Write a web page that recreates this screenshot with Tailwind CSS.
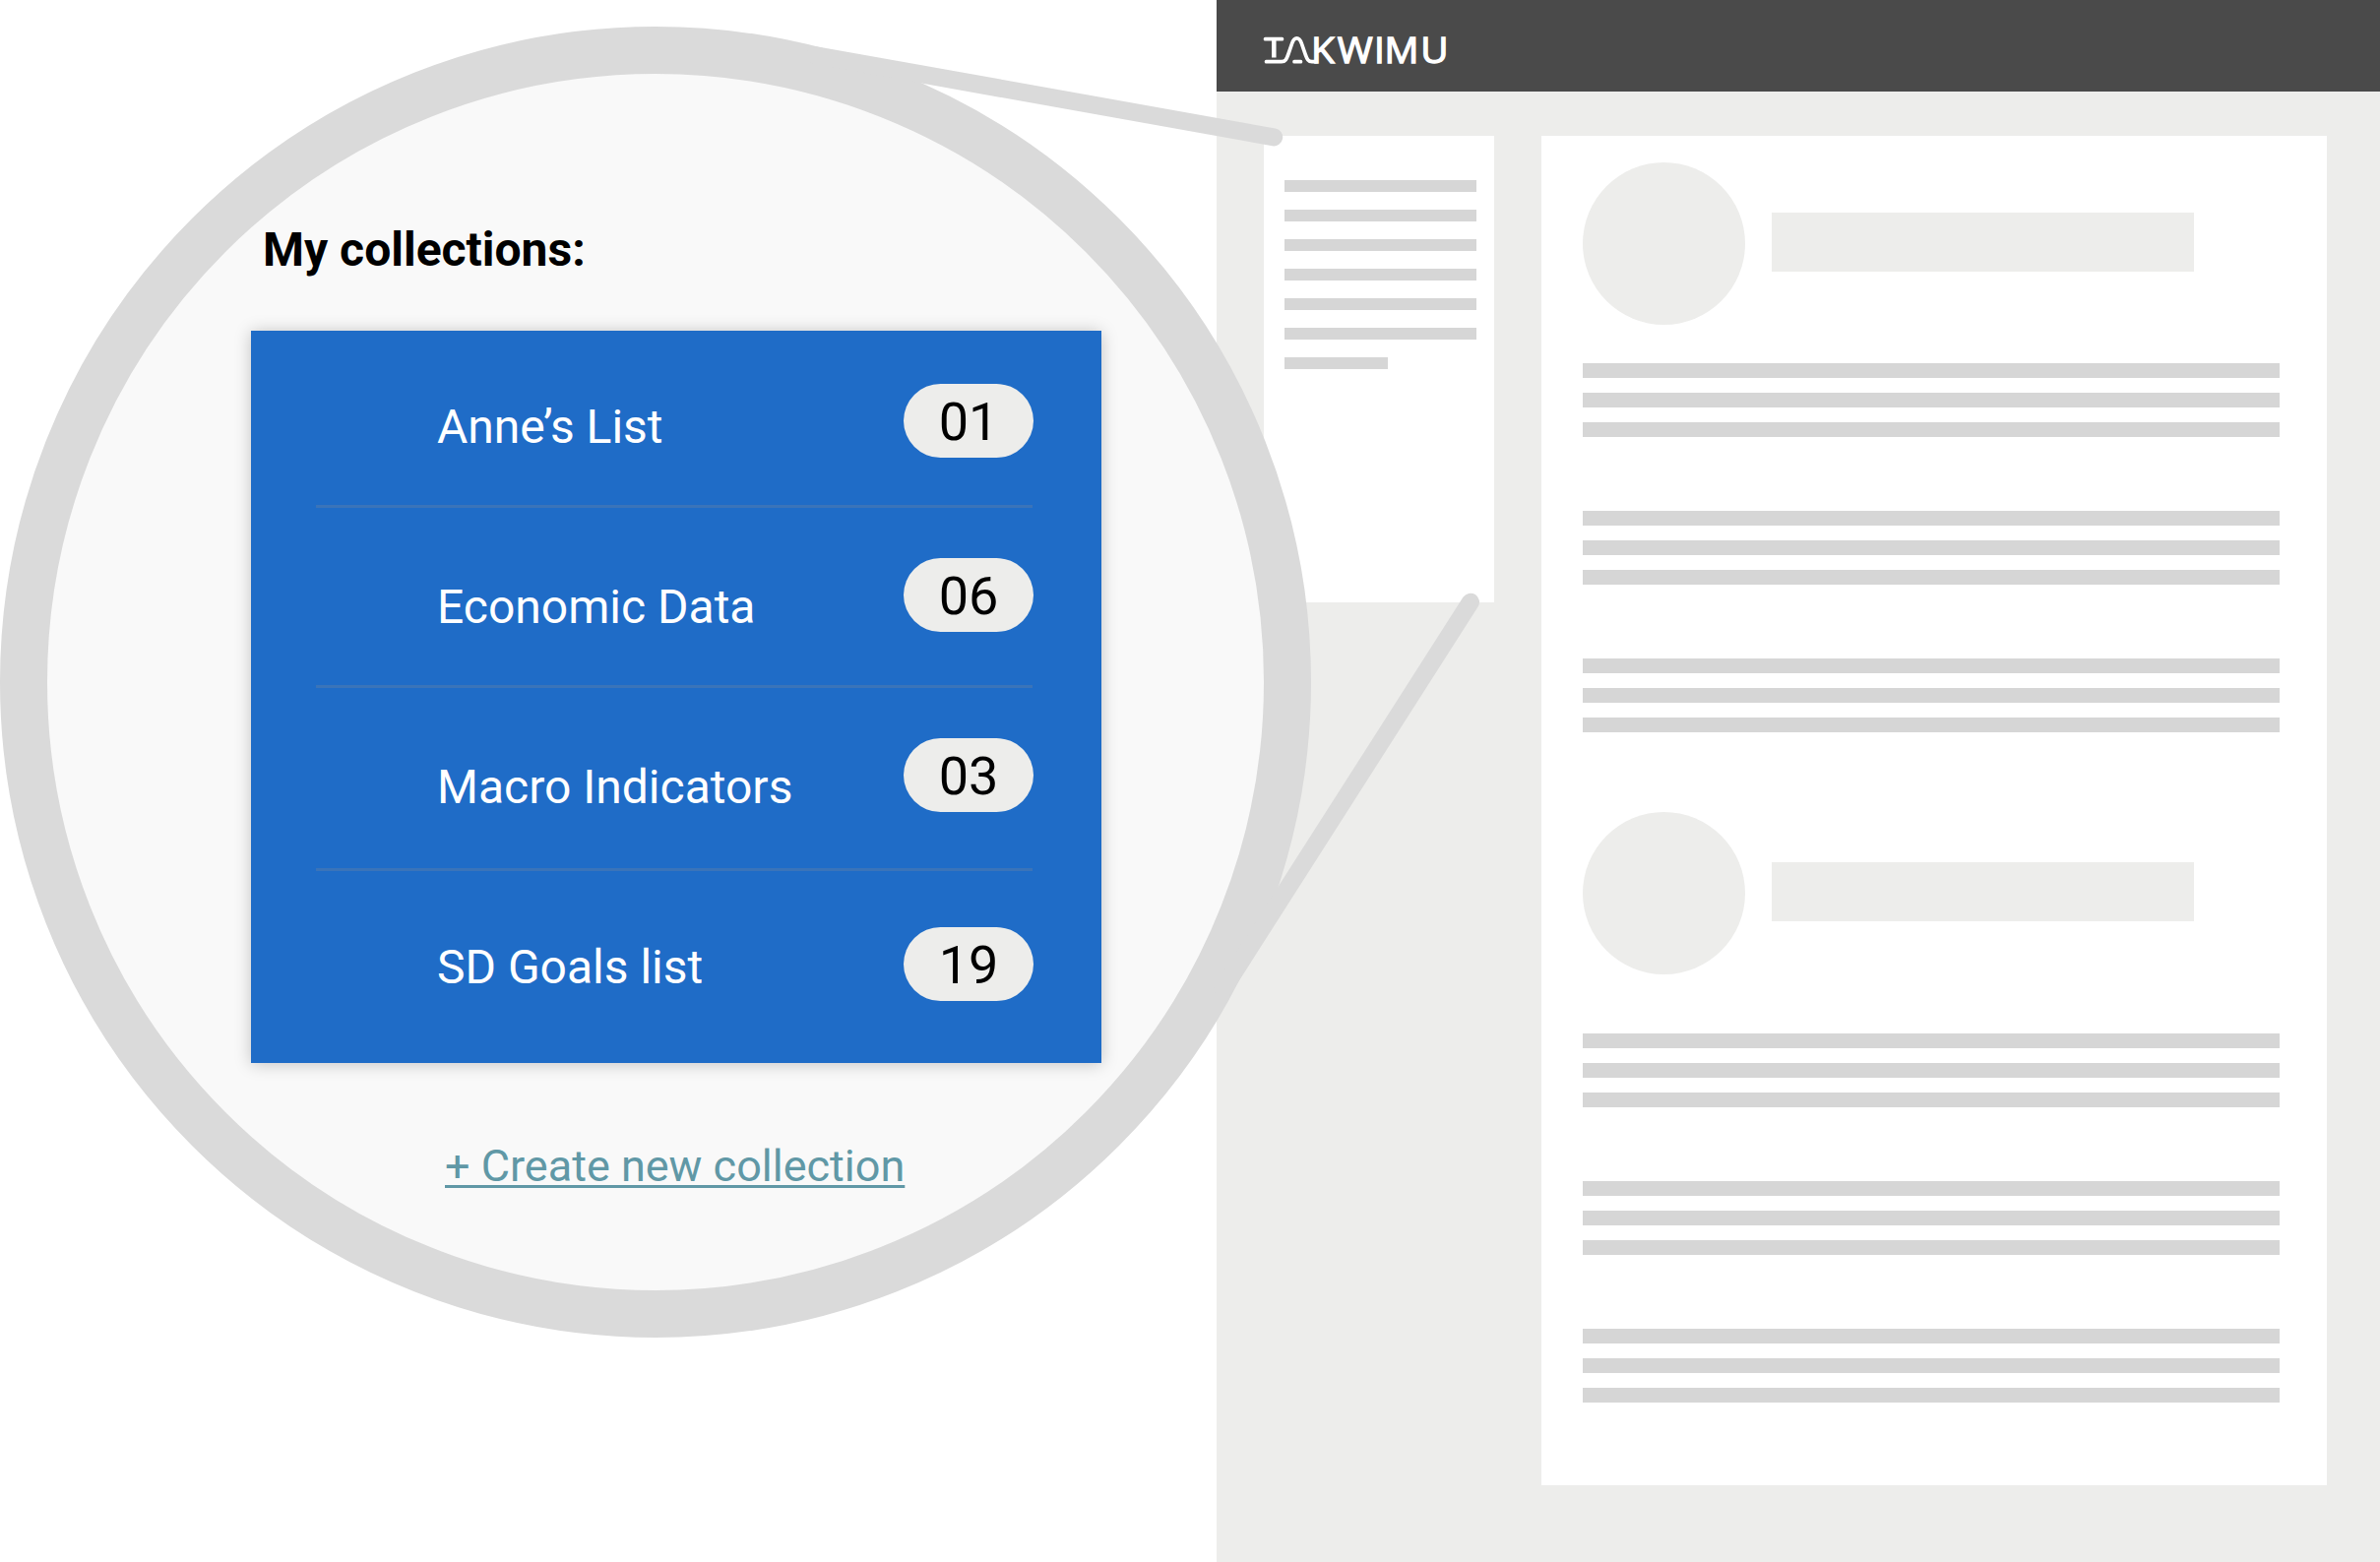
<!DOCTYPE html>
<html lang="en">
<head>
<meta charset="utf-8">
<title>Takwimu collections</title>
<script src="https://cdn.jsdelivr.net/npm/@tailwindcss/browser@4"></script>
</head>
<body class="bg-white font-['Roboto',sans-serif]">
<div class="relative flex h-[1587px] w-[2418px] justify-end overflow-hidden">

  <!-- Page wireframe -->
  <div class="flex w-[1182px] flex-col bg-[#ededeb]">
    <header class="flex h-[93px] shrink-0 items-start bg-[#4a4a4a] pl-12 pt-[36px]">
      <svg class="h-[32px] w-[200px] overflow-visible" viewBox="0 0 200 32" fill="none" stroke="#fff" role="img" aria-label="Takwimu">
        <path d="M1.500 3.700H18.500M2.500 26.700H18C22 26.700 23 24 24.500 20L28.500 8.500C31 1 36 1 38.500 8.500L42.500 20C44 24 45 26.700 49 26.700H53M31 26.700H37.500" stroke-width="3.700" stroke-linecap="round"/>
        <path d="M10.300 4V22.500" stroke-width="4.500"/>
        <text transform="scale(1.05 1)" y="28.300" x="45.700 71.100 106.600 116.600 151.700" fill="#fff" stroke-width="1.300" font-family="Open Sans" font-size="37">KWIMU</text>
      </svg>
    </header>
    <div class="flex items-start gap-12 pl-12 pt-[45px]">
      <aside class="flex h-[474px] w-[234px] flex-col gap-[18px] bg-white pl-[21px] pr-[18px] pt-[45px]">
        <div class="h-3 bg-[#d6d6d6]"></div>
        <div class="h-3 bg-[#d6d6d6]"></div>
        <div class="h-3 bg-[#d6d6d6]"></div>
        <div class="h-3 bg-[#d6d6d6]"></div>
        <div class="h-3 bg-[#d6d6d6]"></div>
        <div class="h-3 bg-[#d6d6d6]"></div>
        <div class="h-3 w-[105px] bg-[#d6d6d6]"></div>
      </aside>
      <main class="flex h-[1371px] w-[798px] flex-col bg-white pl-[42px] pr-12 pt-[27px]">
        <div class="flex h-[165px] gap-[27px]">
          <div class="size-[165px] rounded-full bg-[#ededeb]"></div>
          <div class="mt-[51px] h-[60px] w-[429px] bg-[#ededeb]"></div>
        </div>
        <div class="mt-[39px] flex flex-col gap-[75px]">
          <div class="flex flex-col gap-[15px]"><div class="h-[15px] bg-[#d6d6d6]"></div><div class="h-[15px] bg-[#d6d6d6]"></div><div class="h-[15px] bg-[#d6d6d6]"></div></div>
          <div class="flex flex-col gap-[15px]"><div class="h-[15px] bg-[#d6d6d6]"></div><div class="h-[15px] bg-[#d6d6d6]"></div><div class="h-[15px] bg-[#d6d6d6]"></div></div>
          <div class="flex flex-col gap-[15px]"><div class="h-[15px] bg-[#d6d6d6]"></div><div class="h-[15px] bg-[#d6d6d6]"></div><div class="h-[15px] bg-[#d6d6d6]"></div></div>
        </div>
        <div class="mt-[81px] flex h-[165px] gap-[27px]">
          <div class="size-[165px] rounded-full bg-[#ededeb]"></div>
          <div class="mt-[51px] h-[60px] w-[429px] bg-[#ededeb]"></div>
        </div>
        <div class="mt-[60px] flex flex-col gap-[75px]">
          <div class="flex flex-col gap-[15px]"><div class="h-[15px] bg-[#d6d6d6]"></div><div class="h-[15px] bg-[#d6d6d6]"></div><div class="h-[15px] bg-[#d6d6d6]"></div></div>
          <div class="flex flex-col gap-[15px]"><div class="h-[15px] bg-[#d6d6d6]"></div><div class="h-[15px] bg-[#d6d6d6]"></div><div class="h-[15px] bg-[#d6d6d6]"></div></div>
          <div class="flex flex-col gap-[15px]"><div class="h-[15px] bg-[#d6d6d6]"></div><div class="h-[15px] bg-[#d6d6d6]"></div><div class="h-[15px] bg-[#d6d6d6]"></div></div>
        </div>
      </main>
    </div>
  </div>

  <!-- Magnifier callout -->
  <section class="absolute left-0 top-[27px] size-[1332px] rounded-full border-[48px] border-[#dadada] bg-[#f9f9f9] pl-[207px] pt-[151px]">
    <h1 class="ml-3 text-[48px] leading-[56px] font-bold whitespace-nowrap text-black">My collections:</h1>
    <ul class="mt-[54px] h-[744px] w-[864px] bg-[#1f6cc7] pl-[66px] pr-[70px] text-[48px] leading-[56px] text-white shadow-[0_1px_16px_rgba(0,0,0,0.22)]">
      <li class="flex h-[180px] items-start border-b-[3px] border-[#3a74b9] pl-[123px]">
        <span class="mt-[70px]">Anne’s List</span>
        <span class="-mr-px ml-auto mt-[54px] h-[75px] w-[132px] rounded-full bg-[#ededeb] pt-px text-center text-[54px] leading-[75px] text-black">01</span>
      </li>
      <li class="flex h-[183px] items-start border-b-[3px] border-[#3a74b9] pl-[123px]">
        <span class="mt-[73px]">Economic Data</span>
        <span class="-mr-px ml-auto mt-[51px] h-[75px] w-[132px] rounded-full bg-[#ededeb] pt-px text-center text-[54px] leading-[75px] text-black">06</span>
      </li>
      <li class="flex h-[186px] items-start border-b-[3px] border-[#3a74b9] pl-[123px]">
        <span class="mt-[73px]">Macro Indicators</span>
        <span class="-mr-px ml-auto mt-[51px] h-[75px] w-[132px] rounded-full bg-[#ededeb] pt-px text-center text-[54px] leading-[75px] text-black">03</span>
      </li>
      <li class="flex h-[195px] items-start pl-[123px]">
        <span class="mt-[70px]">SD Goals list</span>
        <span class="-mr-px ml-auto mt-[57px] h-[75px] w-[132px] rounded-full bg-[#ededeb] pt-px text-center text-[54px] leading-[75px] text-black">19</span>
      </li>
    </ul>
    <a class="ml-[197px] mt-[79px] block w-max text-[45px] leading-[52px] text-[#6098a6] underline decoration-[3px] underline-offset-[4px]">+ Create new collection</a>
  </section>

  <!-- Lines from the lens to the sidebar card -->
  <svg class="pointer-events-none absolute left-0 top-0 h-[1587px] w-[2418px]" viewBox="0 0 2418 1587" fill="none" stroke="#dadada" stroke-width="18" stroke-linecap="round">
    <path d="M828 56L1294.200 139.400"/>
    <path d="M1242.600 1005.200L1494 611.700"/>
  </svg>
</div>
</body>
</html>
